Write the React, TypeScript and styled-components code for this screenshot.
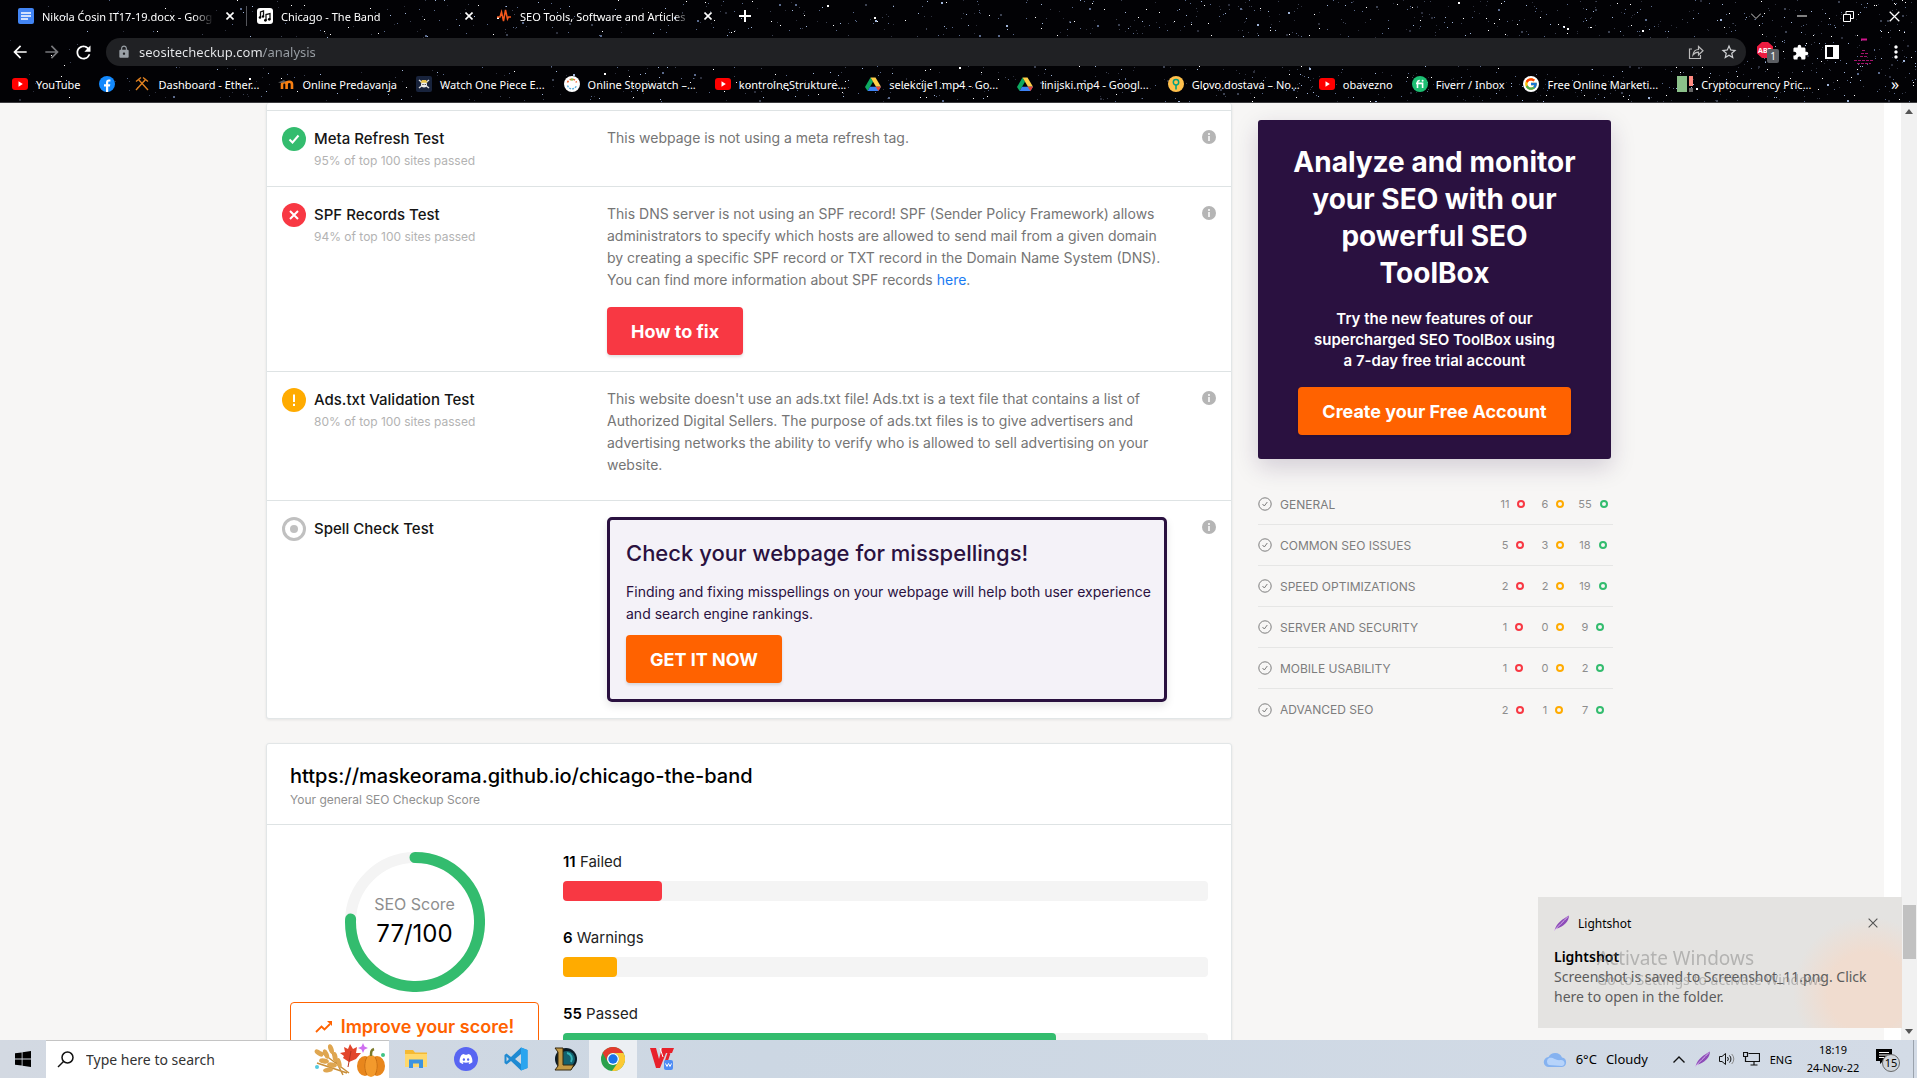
import React from "react";
import styled, { createGlobalStyle } from "styled-components";
import { FcGoogle } from "react-icons/fc";
import { FaDiscord } from "react-icons/fa";
import { MdExtension, MdLock, MdRefresh, MdArrowBack, MdArrowForward, MdStarBorder, MdMoreVert } from "react-icons/md";

const ui = `"Noto Sans", "Open Sans", sans-serif`;
const brand = `Inter, "Open Sans", sans-serif`;

const c = {
  red: "#f83843",
  amber: "#ffab00",
  green: "#33bc6e",
  orange: "#ff6200",
  plum: "#2a1140",
  line: "#dee3e4",
  page: "#f7f6f5",
};

const Global = createGlobalStyle`
  *, *::before, *::after { box-sizing: border-box; }
  body { margin: 0; background: #f7f6f5; }
  h1, h2, h3, p, ul { margin: 0; padding: 0; }
  ul { list-style: none; }
  button, input { font: inherit; border: 0; padding: 0; background: none; color: inherit; }
  a { color: inherit; text-decoration: none; }
  svg { display: block; flex: none; }
`;

const Screen = styled.div`
  display: flex;
  flex-direction: column;
  height: 100vh;
  overflow: hidden;
  font-family: ${brand};
`;

/* ---------- browser window ---------- */

const Browser = styled.header`
  position: relative;
  background: #020205;
  border-bottom: 1px solid #3c3c3f;
  color: #fff;
  font-family: ${ui};
  font-size: 12px;
  flex: none;
`;
const Sky = styled.svg`
  position: absolute;
  inset: 0;
  width: 100%;
  height: 100%;
`;
const Bar = styled.div<{ $h: number }>`
  position: relative;
  display: flex;
  align-items: center;
  height: ${(p) => p.$h}px;
`;
const TabBar = styled(Bar)`
  padding: 0 0 4px 8px;
`;
const ToolBar = styled(Bar)`
  padding-right: 5px;
`;
const Tab = styled.div<{ $divider?: boolean }>`
  display: flex;
  align-items: center;
  gap: 8px;
  width: 239px;
  padding: 0 8px 0 10px;
  height: 20px;
  border-right: 1px solid ${(p) => (p.$divider ? "#55565c" : "transparent")};
`;
const TabTitle = styled.a`
  flex: 1;
  font-size: 11px;
  overflow: hidden;
  white-space: nowrap;
  mask-image: linear-gradient(90deg, #000 88%, transparent);
`;
const IconButton = styled.button<{ $w?: number }>`
  display: flex;
  align-items: center;
  justify-content: center;
  width: ${(p) => p.$w ?? 16}px;
  height: 28px;
  flex: none;
`;
const WindowControls = styled.div`
  display: flex;
  margin-left: auto;
`;
const Address = styled.label`
  display: flex;
  align-items: center;
  gap: 8px;
  flex: 1;
  height: 28px;
  margin: 0 6px 0 4px;
  padding: 0 5px 0 11px;
  border-radius: 14px;
  background: #202124;
  color: #9aa0a6;
`;
const AddressInput = styled.input`
  flex: 1;
  outline: 0;
  font-size: 13px;
  color: transparent;
  background: linear-gradient(90deg, #e8eaed 124px, #9aa0a6 124px);
  background-clip: text;
`;
const Bookmarks = styled(Bar)`
  gap: 19px;
  padding: 0 12px 2px;
`;
const Bookmark = styled.a`
  display: flex;
  align-items: center;
  gap: 8px;
  white-space: nowrap;
  font-size: 11px;
`;
const More = styled.button`
  margin-left: auto;
  width: 20px;
  font-size: 16px;
`;

const stars = (() => {
  let seed = 41;
  const rnd = () => {
    seed = (seed * 16807) % 2147483647;
    return seed / 2147483647;
  };
  const tones = ["#ffffff", "#9fb4d8", "#5a6a8c", "#3c4252", "#2c2f3c"];
  return Array.from({ length: 1800 }, () => {
    const x = Math.floor(1920 * Math.pow(rnd(), 0.65));
    const y = Math.floor(103 * rnd());
    const t = tones[Math.floor(Math.pow(rnd(), 0.8) * 5)];
    const s = rnd() > 0.92 ? 2 : 1;
    return { x, y, t, s };
  });
})();

const Doc = () => (
  <svg width="16" height="16"><rect width="16" height="16" rx="2" fill="#4285f4" /><path d="M3 5h10M3 8h10M3 11h7" stroke="#fff" strokeWidth="1.6" /></svg>
);
const Music = () => (
  <svg width="16" height="16"><rect width="16" height="16" rx="3" fill="#fff" /><path d="M3.500 9V4l3-1v5M9 12V6.500l4-1V11" stroke="#111" fill="none" strokeWidth="1.300" /><circle cx="3" cy="9.500" r="1.300" /><circle cx="6" cy="8.500" r="1.200" /><circle cx="8.400" cy="12.300" r="1.400" /><circle cx="12.300" cy="11.300" r="1.400" /></svg>
);
const Pulse = () => (
  <svg width="16" height="16"><path d="M1 9h3l1.500-5 2 9L9.500 2l2 9 1-2H15" stroke="#f4581c" fill="none" strokeWidth="1.500" /></svg>
);
const YouTube = () => (
  <svg width="16" height="16"><rect y="2" width="16" height="12" rx="3" fill="#f00" /><path d="M6.500 5.300 10.800 8l-4.300 2.700z" fill="#fff" /></svg>
);
const Facebook = () => (
  <svg width="16" height="16"><circle cx="8" cy="8" r="8" fill="#1389fd" /><path d="M7 16v-5.500H5V8.200h2V6.500C7 4.500 8.100 3.500 9.900 3.500l1.500.1v2h-1c-1 0-1.200.5-1.200 1.200v1.400h2.100l-.4 2.300H9.200V16z" fill="#fff" /></svg>
);
const Hammers = () => (
  <svg width="16" height="16"><path d="M2 14 12 3M14 14 4 3M9 1.500l5 4M7 1.500l-5 4" stroke="#e0801f" fill="none" strokeWidth="1.400" /></svg>
);
const Moodle = () => (
  <svg width="16" height="16"><path d="M4 13V8.500a2.200 2.200 0 0 1 4.600 0V13M8.600 8.500a2.700 2.700 0 0 1 5.400 0V13" stroke="#f98012" strokeWidth="2.600" fill="none" /><path d="M0 6.500 6 4 8 6 3 7z" fill="#5b5b5b" /></svg>
);
const Pirate = () => (
  <svg width="16" height="16"><rect width="16" height="16" rx="2" fill="#18233c" /><path d="m3 4 10 8M13 4 3 12" stroke="#ddd" strokeWidth="1.500" /><circle cx="8" cy="8.500" r="3" fill="#eee" /><path d="M4.500 6.800h7L10 4H6z" fill="#e8c34a" /><path d="M6.500 8.500h1M8.700 8.500h1" stroke="#111" strokeWidth="1.200" /></svg>
);
const Stopwatch = () => (
  <svg width="16" height="16"><circle cx="8" cy="8" r="8" fill="#fff" /><path d="M3.500 9.500a4.700 4.700 0 0 0 9 0" stroke="#5ab0e0" strokeWidth="1.400" strokeDasharray="2 1" fill="none" /><path d="M3.500 6.500a4.700 4.700 0 0 1 9 0" stroke="#f0622c" strokeWidth="1.600" strokeDasharray="2 1.500" fill="none" /><circle cx="8" cy="3.500" r="1.200" fill="#8bc34a" /></svg>
);
const Drive = () => (
  <svg width="16" height="16"><path d="M5.500 1.500 0 11l2.600 4L8 5.800z" fill="#0da960" /><path d="M5.500 1.500h5L16 10.800h-5z" fill="#ffcf48" /><path d="M5 10.800h11L13.400 15H2.600z" fill="#3c82f5" /><path d="m16 10.800-2.600 4.200-2.800-4.200z" fill="#ea4335" /></svg>
);
const Glovo = () => (
  <svg width="16" height="16"><circle cx="8" cy="8" r="8" fill="#ffc04c" /><circle cx="8" cy="6.300" r="2.700" stroke="#00a082" strokeWidth="1.500" fill="none" /><path d="M8 9v4.500" stroke="#00a082" strokeWidth="1.600" /></svg>
);
const Fiverr = () => (
  <svg width="16" height="16"><circle cx="8" cy="8" r="8" fill="#1dbf73" /><path d="M5.500 12V6.500c0-1.400.8-2 2.300-2M4 7.400h6.600V12" stroke="#fff" strokeWidth="1.600" fill="none" /><circle cx="10.600" cy="4.800" r="1" fill="#fff" /></svg>
);
const Crypto = () => (
  <svg width="16" height="16"><path d="M0 0h10v16H0z" fill="#8bc08a" /><path d="M12 0h4v10h-4z" fill="#ff8a80" /><path d="M12 12h4v4h-4z" fill="#666" /></svg>
);
const Google = () => (
  <svg width="16" height="16"><circle cx="8" cy="8" r="8" fill="#fff" /><FcGoogle x="1" y="1" size={14} /></svg>
);
const Cross = ({ size = 8, w = 1.6 }: { size?: number; w?: number }) => (
  <svg width={size} height={size} viewBox="0 0 8 8"><path d="m.5.5 7 7M7.500.5l-7 7" stroke="currentColor" strokeWidth={w} /></svg>
);

const bookmarks: [React.ReactNode, string][] = [
  [<YouTube />, "YouTube"],
  [<Facebook />, ""],
  [<Hammers />, "Dashboard - Ether..."],
  [<Moodle />, "Online Predavanja"],
  [<Pirate />, "Watch One Piece E..."],
  [<Stopwatch />, "Online Stopwatch –..."],
  [<YouTube />, "kontrolneStrukture..."],
  [<Drive />, "selekcije1.mp4 - Go..."],
  [<Drive />, "linijski.mp4 - Googl..."],
  [<Glovo />, "Glovo.dostava – No..."],
  [<YouTube />, "obavezno"],
  [<Fiverr />, "Fiverr / Inbox"],
  [<Google />, "Free Online Marketi..."],
  [<Crypto />, "Cryptocurrency Pric..."],
];

const BrowserChrome = () => (
  <Browser>
    <Sky viewBox="0 0 1920 103" preserveAspectRatio="xMaxYMin slice" shapeRendering="crispEdges">
      {stars.map((s, i) => <rect key={i} x={s.x} y={s.y} width={s.s} height={s.s} fill={s.t} />)}
    </Sky>
    <TabBar $h={36}>
      <Tab $divider><Doc /><TabTitle href="#doc">Nikola Ćosin IT17-19.docx - Goog</TabTitle><IconButton aria-label="Close tab"><Cross /></IconButton></Tab>
      <Tab><Music /><TabTitle href="#band">Chicago - The Band</TabTitle><IconButton aria-label="Close tab"><Cross /></IconButton></Tab>
      <Tab><Pulse /><TabTitle href="#seo">SEO Tools, Software and Articles</TabTitle><IconButton aria-label="Close tab"><Cross /></IconButton></Tab>
      <IconButton $w={40} aria-label="New tab"><svg width="12" height="12"><path d="M6 0v12M0 6h12" stroke="#fff" strokeWidth="2" /></svg></IconButton>
      <WindowControls>
        <IconButton $w={46} aria-label="Search tabs"><svg width="10" height="6"><path d="m0 .5 5 5 5-5" stroke="#ccc" fill="none" /></svg></IconButton>
        <IconButton $w={46} aria-label="Minimise"><svg width="10" height="2"><path d="M0 1h10" stroke="#fff" /></svg></IconButton>
        <IconButton $w={46} aria-label="Restore"><svg width="11" height="11"><path d="M.5 3.500h7v7h-7zM3 3V.5h7.500v7H8" stroke="#fff" fill="none" /></svg></IconButton>
        <IconButton $w={46} aria-label="Close"><Cross size={11} w={0.9} /></IconButton>
      </WindowControls>
    </TabBar>
    <ToolBar $h={32}>
      <IconButton $w={40} aria-label="Back"><MdArrowBack size={20} /></IconButton>
      <IconButton $w={24} aria-label="Forward"><MdArrowForward size={20} color="#77787c" /></IconButton>
      <IconButton $w={38} aria-label="Reload"><MdRefresh size={21} /></IconButton>
      <Address>
        <MdLock size={14} />
        <AddressInput aria-label="Address" defaultValue="seositecheckup.com/analysis" />
        <IconButton $w={26} aria-label="Share"><svg width="16" height="16"><path d="M4 5H1.500v9.500h11V11M5 11c.5-4 2.500-5.500 5.500-5.500V2.500l4.500 4.300-4.500 4.200V8.200C8 8.200 6.500 9 5 11z" stroke="#bbb" strokeWidth="1.200" fill="none" /></svg></IconButton>
        <IconButton $w={24} aria-label="Bookmark this page"><MdStarBorder size={18} color="#d0d2d5" /></IconButton>
      </Address>
      <IconButton $w={32} aria-label="Adblock Plus">
        <svg width="22" height="22"><path d="M5 1h6l5 4.500v7L11 17H5L0 12.500v-7z" fill="#ee1c40" /><text x="8" y="12" fontSize="7" fontWeight="700" fill="#fff" textAnchor="middle">ABP</text><rect x="10" y="8" width="12" height="14" rx="2" fill="#5b5e63" /><text x="16" y="19" fontSize="10" fill="#fff" textAnchor="middle">1</text></svg>
      </IconButton>
      <IconButton $w={32} aria-label="Extensions"><MdExtension size={17} /></IconButton>
      <IconButton $w={32} aria-label="Side panel"><svg width="14" height="14"><path d="M1 1h12v12H1z" stroke="#fff" strokeWidth="2" fill="none" /><path d="M8 1h5v12H8z" fill="#fff" /></svg></IconButton>
      <IconButton $w={32} aria-label="Profile"><svg width="20" height="28"><path d="M7 1.500h6" stroke="#d0158c" strokeWidth="2" /><path d="M8 12.500h4M7 15.500h7M6 18.500h8M0 22.500h20M3 25.500h14" stroke="#a3136c" strokeDasharray="3 1" /></svg></IconButton>
      <IconButton $w={32} aria-label="Menu"><MdMoreVert size={20} /></IconButton>
    </ToolBar>
    <Bookmarks $h={34}>
      {bookmarks.map(([icon, name], i) => (
        <Bookmark key={i} href="#bookmark" aria-label={name || "Facebook"}>{icon}{name}</Bookmark>
      ))}
      <More aria-label="More bookmarks">»</More>
    </Bookmarks>
  </Browser>
);

/* ---------- page ---------- */

const Viewport = styled.main`
  display: flex;
  flex: 1;
  min-height: 0;
  overflow: hidden;
  background: ${c.page};
`;
const Content = styled.div`
  flex: 1;
  min-width: 0;
  overflow: hidden;
`;
const Wrap = styled.div`
  display: flex;
  align-items: flex-start;
  gap: 26px;
  max-width: 1352px;
  margin: 0 auto;
  padding-right: 7px;
`;
const Column = styled.div`
  flex: 1;
  min-width: 0;
`;
const Card = styled.section`
  background: #fff;
  border: 1px solid #e2e6e7;
  border-radius: 3px;
  box-shadow: 0 1px 3px rgba(0, 0, 0, 0.08);
`;
const TestsCard = styled(Card)`
  border-top: 0;
  padding-top: 7px;
  margin-bottom: 24px;
`;
const TestRow = styled.article<{ $extra?: number }>`
  display: grid;
  grid-template-columns: 24px 285px minmax(0, 560px) 1fr;
  column-gap: 8px;
  padding: 16px 15px ${(p) => 16 + (p.$extra ?? 0)}px;
  border-top: 1px solid ${c.line};
`;
const TestTitle = styled.h3`
  font-size: 15px;
  line-height: 24px;
  font-weight: 500;
  color: #151515;
`;
const Note = styled.p`
  font-size: 12px;
  line-height: 19px;
  color: #b3b3b3;
`;
const Text = styled.p`
  font-size: 14px;
  line-height: 22px;
  color: #757575;
  white-space: nowrap;
`;
const TextLink = styled.a`
  color: #1a7bf2;
`;
const Button = styled.button<{ $color: string; $top: number }>`
  display: inline-block;
  height: 48px;
  margin-top: ${(p) => p.$top}px;
  padding: 0 24px;
  border-radius: 4px;
  background: ${(p) => p.$color};
  color: #fff;
  font-size: 18px;
  font-weight: 700;
  white-space: nowrap;
  box-shadow: 0 2px 3px rgba(0, 0, 0, 0.12);
`;
const InfoButton = styled.button`
  justify-self: end;
  align-self: start;
  margin-top: 3px;
`;
const Promo = styled.div`
  padding: 16px;
  border: 3px solid ${c.plum};
  border-radius: 5px;
  background: #f4f2f8;
  box-shadow: 0 4px 8px rgba(0, 0, 0, 0.1);
`;
const PromoTitle = styled.h2`
  margin-bottom: 11px;
  font-size: 22px;
  line-height: 34px;
  font-weight: 500;
  color: ${c.plum};
`;
const PromoText = styled(Text)`
  color: ${c.plum};
`;

const Status = ({ kind }: { kind: "pass" | "fail" | "warn" | "none" }) => {
  if (kind === "none")
    return <svg width="24" height="24"><circle cx="12" cy="12" r="10.500" fill="#fff" stroke="#c0c0c0" strokeWidth="3" /><circle cx="12" cy="12" r="4" fill="#c0c0c0" /></svg>;
  const fill = { pass: c.green, fail: c.red, warn: c.amber }[kind];
  const d = { pass: "m7.500 12.500 3 3 6-7", fail: "m8 8 8 8M16 8l-8 8", warn: "M12 6.500v7.500M12 15.700v2.200" }[kind];
  return <svg width="24" height="24"><circle cx="12" cy="12" r="12" fill={fill} /><path d={d} stroke="#fff" strokeWidth="2" fill="none" /></svg>;
};
const Info = () => (
  <InfoButton aria-label="More information">
    <svg width="14" height="14"><circle cx="7" cy="7" r="7" fill="#b5b5b5" /><path d="M7 6v5M7 3v2" stroke="#fff" strokeWidth="1.500" /></svg>
  </InfoButton>
);
const Test = ({ kind, title, note, extra, children }: { kind: "pass" | "fail" | "warn" | "none"; title: string; note?: string; extra?: number; children: React.ReactNode }) => (
  <TestRow $extra={extra}>
    <Status kind={kind} />
    <div><TestTitle>{title}</TestTitle>{note && <Note>{note}</Note>}</div>
    <div>{children}</div>
    <Info />
  </TestRow>
);

const ScoreHead = styled.header`
  padding: 19px 23px 13px;
  border-bottom: 1px solid ${c.line};
`;
const SiteTitle = styled.h2`
  font-size: 20px;
  line-height: 26px;
  font-weight: 500;
  color: #000;
`;
const ScoreNote = styled(Note)`
  line-height: 22px;
  color: #909090;
`;
const ScoreBody = styled.div`
  display: grid;
  grid-template-columns: 249px 1fr;
  gap: 24px;
  padding: 25px 23px 40px;
`;
const Gauge = styled.div`
  display: grid;
  justify-items: center;
  align-items: center;
  margin: 2px 0 10px;
  > * { grid-area: 1 / 1; }
`;
const GaugeText = styled.div`
  text-align: center;
  font-size: 16px;
  line-height: 24px;
  color: #8e8e8e;
`;
const GaugeValue = styled.div`
  font-size: 24px;
  line-height: 36px;
  color: #000;
`;
const Improve = styled.a`
  display: flex;
  align-items: center;
  justify-content: center;
  gap: 8px;
  height: 48px;
  border: 1px solid ${c.orange};
  border-radius: 4px;
  color: ${c.orange};
  font-size: 18px;
  font-weight: 600;
`;
const Meter = styled.div`
  height: 76px;
`;
const MeterLabel = styled.h3`
  font-size: 15px;
  line-height: 24px;
  font-weight: 400;
  color: #222;
  padding-bottom: 7px;
  b { font-weight: 600; color: #000; }
`;
const Track = styled.div`
  height: 20px;
  border-radius: 4px;
  background: #f4f4f4;
`;
const Fill = styled.div<{ $color: string }>`
  height: 100%;
  border-radius: 4px;
  background: ${(p) => p.$color};
`;

const Side = styled.aside`
  width: 353px;
  flex: none;
  padding-top: 17px;
`;
const Ad = styled.section`
  padding: 24px 30px;
  border-radius: 3px;
  background: ${c.plum};
  color: #fff;
  text-align: center;
  box-shadow: 0 8px 24px rgba(42, 17, 64, 0.18);
  margin-bottom: 25px;
`;
const AdTitle = styled.h2`
  font-size: 28px;
  line-height: 37px;
  font-weight: 700;
  margin-bottom: 16px;
`;
const AdText = styled.p`
  font-size: 15px;
  line-height: 21px;
  font-weight: 600;
`;
const Category = styled.li`
  display: grid;
  grid-template-columns: 22px 1fr 40px 40px 40px;
  align-items: center;
  height: 41px;
  margin-right: -2px;
  border-bottom: 1px solid #e6e6e5;
  color: #7d7d7d;
  font-size: 12px;
  &:last-child { border-bottom: 0; }
`;
const Count = styled.span<{ $color: string }>`
  display: flex;
  align-items: center;
  justify-content: center;
  gap: 8px;
  color: #8d8d8d;
  font-size: 11px;
  &::after {
    content: "";
    width: 8px;
    height: 8px;
    border: 2px solid ${(p) => p.$color};
    border-radius: 50%;
  }
`;
const Gutter = styled.div`
  width: 17px;
  background: #fff;
`;
const Scroll = styled.div`
  display: flex;
  flex-direction: column;
  align-items: center;
  justify-content: space-between;
  width: 16px;
  padding: 6px 0;
  background: #f1f1f1;
`;
const Thumb = styled.div`
  width: 13px;
  height: 54px;
  margin-top: auto;
  margin-bottom: 70px;
  background: #c1c1c1;
`;

const categories: [string, number, number, number][] = [
  ["GENERAL", 11, 6, 55],
  ["COMMON SEO ISSUES", 5, 3, 18],
  ["SPEED OPTIMIZATIONS", 2, 2, 19],
  ["SERVER AND SECURITY", 1, 0, 9],
  ["MOBILE USABILITY", 1, 0, 2],
  ["ADVANCED SEO", 2, 1, 7],
];
const results: [number, string, string][] = [
  [11, "Failed", c.red],
  [6, "Warnings", c.amber],
  [55, "Passed", c.green],
];

const Page = () => (
  <Viewport>
    <Content>
      <Wrap>
        <Column>
          <TestsCard>
            <Test kind="pass" title="Meta Refresh Test" note="95% of top 100 sites passed">
              <Text>This webpage is not using a meta refresh tag.</Text>
            </Test>
            <Test kind="fail" title="SPF Records Test" note="94% of top 100 sites passed">
              <Text>
                This DNS server is not using an SPF record! SPF (Sender Policy Framework) allows<br />
                administrators to specify which hosts are allowed to send mail from a given domain<br />
                by creating a specific SPF record or TXT record in the Domain Name System (DNS).<br />
                You can find more information about SPF records <TextLink href="#spf">here</TextLink>.
              </Text>
              <Button $color={c.red} $top={16}>How to fix</Button>
            </Test>
            <Test kind="warn" title="Ads.txt Validation Test" note="80% of top 100 sites passed" extra={8}>
              <Text>
                This website doesn't use an ads.txt file! Ads.txt is a text file that contains a list of<br />
                Authorized Digital Sellers. The purpose of ads.txt files is to give advertisers and<br />
                advertising networks the ability to verify who is allowed to sell advertising on your<br />
                website.
              </Text>
            </Test>
            <Test kind="none" title="Spell Check Test">
              <Promo>
                <PromoTitle>Check your webpage for misspellings!</PromoTitle>
                <PromoText>
                  Finding and fixing misspellings on your webpage will help both user experience<br />
                  and search engine rankings.
                </PromoText>
                <Button $color={c.orange} $top={10}>GET IT NOW</Button>
              </Promo>
            </Test>
          </TestsCard>
          <Card>
            <ScoreHead>
              <SiteTitle>https://maskeorama.github.io/chicago-the-band</SiteTitle>
              <ScoreNote>Your general SEO Checkup Score</ScoreNote>
            </ScoreHead>
            <ScoreBody>
              <div>
                <Gauge>
                  <svg width="140" height="140" viewBox="0 0 140 140">
                    <circle cx="70" cy="70" r="64.500" fill="none" stroke="#f4f4f4" strokeWidth="11" />
                    <path d="M70 5.500A64.500 64.500 0 1 1 5.600 67" fill="none" stroke={c.green} strokeWidth="11" strokeLinecap="round" />
                  </svg>
                  <GaugeText>SEO Score<GaugeValue>77/100</GaugeValue></GaugeText>
                </Gauge>
                <Improve href="#improve">
                  <svg width="18" height="13"><path d="m1 12 5.500-5.500 3 3L15 4" stroke={c.orange} strokeWidth="1.800" fill="none" /><path d="M12 1h5v5z" fill={c.orange} /></svg>
                  Improve your score!
                </Improve>
              </div>
              <div>
                {results.map(([n, name, color]) => (
                  <Meter key={name}>
                    <MeterLabel><b>{n}</b> {name}</MeterLabel>
                    <Track><Fill $color={color} style={{ width: `${(n / 72) * 100}%` }} /></Track>
                  </Meter>
                ))}
              </div>
            </ScoreBody>
          </Card>
        </Column>
        <Side>
          <Ad>
            <AdTitle>Analyze and monitor<br />your SEO with our<br />powerful SEO<br />ToolBox</AdTitle>
            <AdText>Try the new features of our<br />supercharged SEO ToolBox using<br />a 7-day free trial account</AdText>
            <Button $color={c.orange} $top={16}>Create your Free Account</Button>
          </Ad>
          <ul>
            {categories.map(([name, f, w, p]) => (
              <Category key={name}>
                <svg width="14" height="14"><circle cx="7" cy="7" r="6.200" fill="none" stroke="#7d7d7d" /><path d="m4.500 7 1.800 2 3-4" fill="none" stroke="#7d7d7d" /></svg>
                <a href="#category">{name}</a>
                <Count $color={c.red}>{f}</Count>
                <Count $color={c.amber}>{w}</Count>
                <Count $color={c.green}>{p}</Count>
              </Category>
            ))}
          </ul>
        </Side>
      </Wrap>
    </Content>
    <Gutter />
    <Scroll>
      <svg width="8" height="5"><path d="M0 5 4 0l4 5z" fill="#555" /></svg>
      <Thumb />
      <svg width="8" height="5"><path d="m0 0 4 5 4-5z" fill="#555" /></svg>
    </Scroll>
  </Viewport>
);

/* ---------- desktop ---------- */

const Toast = styled.section`
  position: fixed;
  right: 15px;
  bottom: 50px;
  width: 364px;
  height: 131px;
  padding: 16px;
  background: radial-gradient(circle at 330px 95px, #f0dccf 40px, rgba(240, 220, 207, 0) 75px), #e4e3e1;
  font-family: ${ui};
`;
const ToastHead = styled.div`
  display: flex;
  align-items: center;
  gap: 8px;
  height: 20px;
  font-size: 12px;
  margin-bottom: 14px;
  button { margin-left: auto; margin-right: 8px; color: #555; }
`;
const ToastTitle = styled.h2`
  font-size: 14px;
  line-height: 20px;
  font-weight: 600;
`;
const ToastText = styled.p`
  font-size: 14px;
  line-height: 20px;
  color: #5c5c5c;
  white-space: nowrap;
`;
const Watermark = styled.div`
  position: fixed;
  right: 80px;
  bottom: 88px;
  width: 240px;
  font-family: ${ui};
  color: rgba(120, 120, 120, 0.45);
  font-size: 14px;
  line-height: 20px;
  white-space: nowrap;
  strong { display: block; font-size: 19px; line-height: 24px; font-weight: 400; }
`;
const Taskbar = styled.footer`
  display: flex;
  align-items: stretch;
  flex: none;
  height: 38px;
  background: linear-gradient(90deg, #d3d9e2, #ccd7e3 40%, #d3dbe6);
  font-family: ${ui};
  font-size: 14px;
`;
const TaskButton = styled.button<{ $w: number; $on?: boolean }>`
  display: flex;
  align-items: center;
  justify-content: center;
  width: ${(p) => p.$w}px;
  background: ${(p) => (p.$on ? "#eceff3" : "transparent")};
`;
const Search = styled.label`
  display: flex;
  align-items: center;
  gap: 12px;
  width: 343px;
  padding: 0 2px 0 11px;
  background: #fff;
  border-top: 1px solid #c4c4c4;
  margin-right: 2px;
`;
const SearchInput = styled.input`
  flex: 1;
  min-width: 0;
  outline: 0;
  &::placeholder { color: #333; opacity: 1; }
`;
const Tray = styled.div`
  display: flex;
  align-items: center;
  margin-left: auto;
  border-right: 1px solid #9ba3ad;
  margin-right: 3px;
`;
const Weather = styled.button`
  display: flex;
  align-items: center;
  gap: 9px;
  font-size: 13px;
  margin-right: 19px;
`;
const Lang = styled.button`
  width: 36px;
  font-size: 11px;
`;
const Clock = styled.time`
  width: 68px;
  text-align: center;
  font-size: 11px;
  line-height: 18px;
`;

const Feather = () => (
  <svg width="16" height="16"><path d="M.5 15.500C3 7 9 4 15 .5 15 6 10 12 1.500 14z" fill="#8d4cb8" /><path d="M.5 15.500C5 10 9 7 14 1.500" stroke="#d9b6ee" fill="none" /></svg>
);
const Harvest = () => (
  <svg width="74" height="34" viewBox="0 0 74 34">
    <g stroke="#c98f3a" strokeWidth="1.500" fill="none"><path d="M8 9l28 21M16 4l14 28M4 20l30 10" /></g>
    <g fill="#dfa650"><ellipse cx="6" cy="10" rx="5" ry="2.500" transform="rotate(35 6 10)" /><ellipse cx="13" cy="11" rx="5" ry="2.500" transform="rotate(65 13 11)" /><ellipse cx="11" cy="18" rx="5" ry="2.500" transform="rotate(10 11 18)" /><ellipse cx="18" cy="6" rx="5" ry="2.500" transform="rotate(70 18 6)" /><ellipse cx="22" cy="14" rx="5" ry="2.500" transform="rotate(80 22 14)" /><ellipse cx="19" cy="22" rx="5" ry="2.500" transform="rotate(10 19 22)" /><ellipse cx="15" cy="27" rx="5" ry="2.300" transform="rotate(-10 15 27)" /><ellipse cx="26" cy="20" rx="5" ry="2.300" transform="rotate(75 26 20)" /></g>
    <path d="m37 1 3 5 4-2-1 6 5 0-5 6-7 3-6-4 1-2-4-3 5-1-1-5 4 2z" fill="#e2452b" /><path d="M38 8 35 24" stroke="#b53420" />
    <path d="m50 0 1.500 3.500L55 5l-3.500 1.500L50 10l-1.500-3.500L45 5l3.500-1.500z" fill="#cf6ff0" />
    <ellipse cx="52" cy="23" rx="8" ry="10" fill="#e8861c" /><ellipse cx="64" cy="23" rx="8" ry="10" fill="#e8861c" /><ellipse cx="58" cy="23" rx="7" ry="11" fill="#f39a2c" /><path d="M58 13c0-4 0-6 3-7" stroke="#7c7a2a" strokeWidth="2.500" fill="none" /><path d="M54 14c-3 5-3 13 0 18M62 14c3 5 3 13 0 18" stroke="#c96d10" fill="none" />
    <circle cx="70" cy="12" r="2" fill="#40c486" /><circle cx="4" cy="24" r="2" fill="#56cbe0" />
  </svg>
);

const Desktop = () => (
  <Taskbar>
    <TaskButton $w={46} aria-label="Start"><svg width="16" height="16"><path d="M0 2.300 6.700 1.400v6.200H0zM7.500 1.300 16 0v7.600H7.500zM0 8.400h6.700v6.200L0 13.700zM7.500 8.400H16V16l-8.500-1.300z" /></svg></TaskButton>
    <Search>
      <svg width="17" height="17"><circle cx="10.500" cy="6.500" r="5.500" fill="none" stroke="#111" strokeWidth="1.500" /><path d="M6.500 10.500 1 16" stroke="#111" strokeWidth="1.500" /></svg>
      <SearchInput aria-label="Search" placeholder="Type here to search" />
      <Harvest />
    </Search>
    <TaskButton $w={50} aria-label="File Explorer"><svg width="22" height="18"><path d="M0 0h8l2 2.500h12V17H0z" fill="#f5b932" /><path d="M0 4h22v13H0z" fill="#ffd86b" /><path d="M4 18V9.500h14V18h-4v-4.500H8V18z" fill="#3c93e0" /></svg></TaskButton>
    <TaskButton $w={50} aria-label="Discord"><svg width="24" height="24"><circle cx="12" cy="12" r="12" fill="#5865f2" /><FaDiscord x="5" y="5" size={14} color="#fff" /></svg></TaskButton>
    <TaskButton $w={49} aria-label="Visual Studio Code"><svg width="24" height="24" viewBox="0 0 24 24"><path d="M17 .5 23.500 3v18L17 23.500 7 14l-4.500 3.500L.5 16V8l2-1.500L7 10zM17 7l-6 5 6 5zM2.500 9.500v5L5 12z" fill="#1f8ad2" fillRule="evenodd" /><path d="M17 .5 23.500 3v18L17 23.500z" fill="#2ba5ef" /></svg></TaskButton>
    <TaskButton $w={49} aria-label="League of Legends"><svg width="24" height="24"><circle cx="13" cy="12" r="11" fill="#0a1a24" /><circle cx="14" cy="12" r="8" fill="#14616e" /><path d="M14 6a6 6 0 0 1 4 9" stroke="#35b4b8" strokeWidth="2" fill="none" /><path d="M2 1h8v17h11l-3 5H2l3-4V5z" fill="#c49a45" stroke="#35280e" /></svg></TaskButton>
    <TaskButton $w={48} $on aria-label="Google Chrome"><svg width="24" height="24" viewBox="0 0 24 24"><circle cx="12" cy="12" r="12" fill="#2ba24c" /><path d="M22.400 6A12 12 0 0 1 11 24l6.200-9A6 6 0 0 0 12 6z" fill="#fcc934" /><path d="M1.600 6A12 12 0 0 1 22.400 6H12a6 6 0 0 0-5.200 9z" fill="#e33b2e" /><circle cx="12" cy="12" r="6" fill="#fff" /><circle cx="12" cy="12" r="4.700" fill="#1a73e8" /></svg></TaskButton>
    <TaskButton $w={50} aria-label="WPS Office"><svg width="24" height="24"><path d="M0 1h6l3 11 3-11h12l-2 5h-6l-6 15H6z" fill="#e8212b" /><path d="m10 1 3 9" stroke="#fff" /><path d="m19 6-3 9" stroke="#e8212b" strokeWidth="3" /><rect x="14" y="13" width="9" height="10" rx="2" fill="#4f8df5" /><path d="m15.500 16.500 1.500 3 1.500-3 1.500 3 1.500-3" stroke="#fff" fill="none" /></svg></TaskButton>
    <Tray>
      <Weather>
        <svg width="24" height="18"><path d="M6 17a5 5 0 0 1-.5-10A7.500 7.500 0 0 1 19 7.500 4.800 4.800 0 0 1 19 17z" fill="#85b2f0" /><path d="M6 15a4 4 0 0 1 0-7c5-1 6 3 12 2 4 0 5 5 1 6z" fill="#b6d3fa" /></svg>
        <span>6°C</span><span>Cloudy</span>
      </Weather>
      <TaskButton $w={24} aria-label="Hidden icons"><svg width="12" height="7"><path d="m.5 6.500 5.500-5.500 5.500 5.500" stroke="#111" strokeWidth="1.400" fill="none" /></svg></TaskButton>
      <TaskButton $w={24} aria-label="Lightshot"><Feather /></TaskButton>
      <TaskButton $w={24} aria-label="Volume"><svg width="17" height="14"><path d="M.5 4.500h2.500L6.500 1.500v11L3 9.500H.5z" stroke="#111" fill="none" /><path d="M8.500 5a3 3 0 0 1 0 4M10.500 3.500a5 5 0 0 1 0 7" stroke="#111" fill="none" /><path d="M12.700 2a7 7 0 0 1 0 10" stroke="#888" fill="none" /></svg></TaskButton>
      <TaskButton $w={24} aria-label="Network"><svg width="17" height="14"><path d="M5.500 1.500h11v8h-11M11 9.500v3M7.500 13h7M.5.500h4v4h-4zM2.500 4.500v5h4" stroke="#111" fill="none" strokeWidth="1.200" /></svg></TaskButton>
      <Lang>ENG</Lang>
      <Clock>18:19<br />24-Nov-22</Clock>
      <TaskButton $w={46} aria-label="Notifications"><svg width="28" height="26"><path d="M0 3h16v12H7l-3 3v-3H0z" /><path d="M3 6.500h10M3 9h10M3 11.500h6" stroke="#fff" /><circle cx="15" cy="17" r="8.500" fill="#d0d5db" stroke="#666" /><text x="15" y="21" fontSize="11" textAnchor="middle">15</text></svg></TaskButton>
    </Tray>
  </Taskbar>
);

export default function App() {
  return (
    <Screen>
      <Global />
      <BrowserChrome />
      <Page />
      <Toast>
        <ToastHead><Feather />Lightshot<button aria-label="Dismiss"><Cross size={10} w={0.9} /></button></ToastHead>
        <ToastTitle>Lightshot</ToastTitle>
        <ToastText>Screenshot is saved to Screenshot_11.png. Click<br />here to open in the folder.</ToastText>
      </Toast>
      <Watermark><strong>Activate Windows</strong>Go to Settings to activate Windows.</Watermark>
      <Desktop />
    </Screen>
  );
}
